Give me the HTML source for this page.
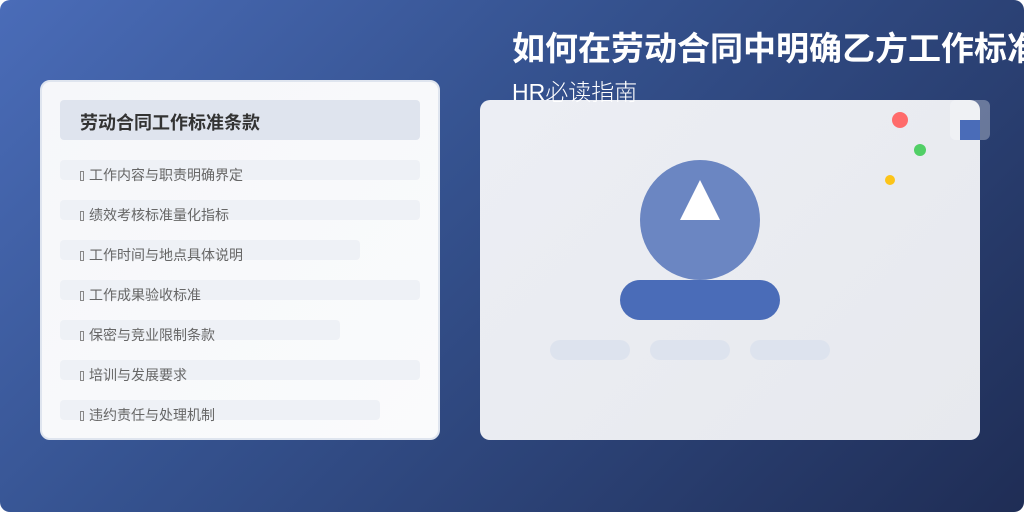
<!DOCTYPE html>
<html><head><meta charset="utf-8"><style>
*{margin:0;padding:0;box-sizing:border-box}
body{width:1024px;height:512px;overflow:hidden;background:#fff;font-family:"Liberation Sans","Noto Sans CJK SC",sans-serif}
.bg{position:absolute;left:0;top:0;width:1024px;height:512px;border-radius:10px;overflow:hidden;background:linear-gradient(135deg,#4a6cb8 0%,#35528f 40%,#1f2d55 100%)}
.card{position:absolute;left:40px;top:80px;width:400px;height:360px;border-radius:10px;background:linear-gradient(135deg,#f6f7fa,#fafbfc);border:2px solid #dfe5ef}
.hd{position:absolute;left:18px;top:18px;width:360px;height:40px;border-radius:4px;background:#dfe4ee;font-size:18px;font-weight:bold;color:#333;padding:14px 0 0 20px;line-height:18px}
.it{position:absolute;left:18px;height:20px;border-radius:4px;background:#eef1f6}
.it span{position:absolute;left:20px;top:7px;font-size:14px;color:#666;white-space:nowrap;line-height:16px}
.it i{display:inline-block;width:4px;height:10px;border:1px solid #888;margin-right:5px;vertical-align:-1px}
.t1{position:absolute;left:512px;top:30px;font-size:33px;font-weight:bold;color:#fff;white-space:nowrap;line-height:38px}
.t2{position:absolute;left:512px;top:78px;font-size:23px;color:#fff;white-space:nowrap;line-height:28px;font-weight:300}
.pan{position:absolute;left:480px;top:100px;width:500px;height:340px;border-radius:10px;background:linear-gradient(135deg,#eceef4,#e7e9ee)}
.dot{position:absolute;border-radius:50%}
</style></head><body>
<div class="bg">
<div class="card">
<div class="hd">劳动合同工作标准条款</div>
<div class="it" style="top:78px;width:360px"><span><i></i>工作内容与职责明确界定</span></div>
<div class="it" style="top:118px;width:360px"><span><i></i>绩效考核标准量化指标</span></div>
<div class="it" style="top:158px;width:300px"><span><i></i>工作时间与地点具体说明</span></div>
<div class="it" style="top:198px;width:360px"><span><i></i>工作成果验收标准</span></div>
<div class="it" style="top:238px;width:280px"><span><i></i>保密与竞业限制条款</span></div>
<div class="it" style="top:278px;width:360px"><span><i></i>培训与发展要求</span></div>
<div class="it" style="top:318px;width:320px"><span><i></i>违约责任与处理机制</span></div>
</div>
<div class="t1">如何在劳动合同中明确乙方工作标准</div>
<div class="pan">
<div class="dot" style="left:160px;top:60px;width:120px;height:120px;background:#6b86c2"></div>
<div style="position:absolute;left:200px;top:80px;width:0;height:0;border-left:20px solid transparent;border-right:20px solid transparent;border-bottom:40px solid #fff"></div>
<div style="position:absolute;left:140px;top:180px;width:160px;height:40px;border-radius:20px;background:#4a6cb8"></div>
<div style="position:absolute;left:70px;top:240px;width:80px;height:20px;border-radius:10px;background:#dde3ee"></div>
<div style="position:absolute;left:170px;top:240px;width:80px;height:20px;border-radius:10px;background:#dde3ee"></div>
<div style="position:absolute;left:270px;top:240px;width:80px;height:20px;border-radius:10px;background:#dde3ee"></div>
<div class="dot" style="left:412px;top:12px;width:16px;height:16px;background:#ff6b6b"></div>
<div class="dot" style="left:434px;top:44px;width:12px;height:12px;background:#51cf66"></div>
<div class="dot" style="left:405px;top:75px;width:10px;height:10px;background:#fcc419"></div>
</div>
<div style="position:absolute;left:950px;top:100px;width:40px;height:40px;border-radius:6px;background:rgba(255,255,255,0.3)"></div>
<div style="position:absolute;left:960px;top:120px;width:20px;height:20px;background:#4a6cb8"></div>
<div class="t2">HR必读指南</div>
</div>
</body></html>
